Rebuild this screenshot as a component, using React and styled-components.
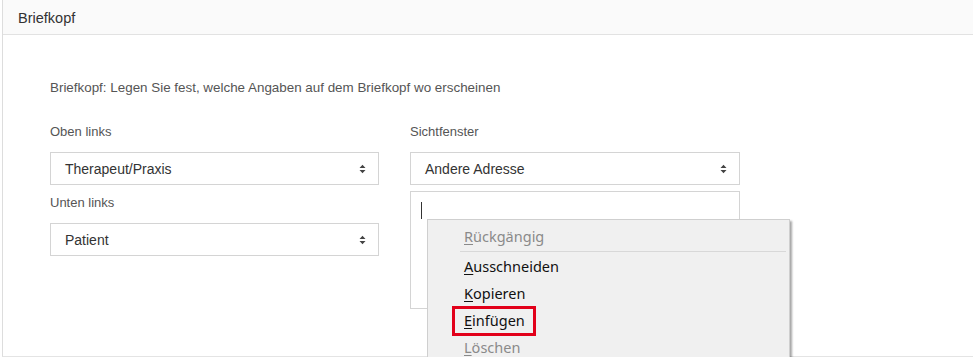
import React from 'react'
import styled, { createGlobalStyle } from 'styled-components'

const Global = createGlobalStyle`
  html, body { margin: 0; padding: 0; background: #fff; overflow: hidden; }
  body { font-family: "Liberation Sans", Arial, sans-serif; color: #333; }
`

const Panel = styled.div`
  margin-left: 2px;
  width: 971px;
  height: 357px;
  border-left: 1px solid #ddd;
  border-bottom: 1px solid #e4e4e4;
  box-sizing: border-box;
`

const Header = styled.div`
  height: 35px;
  box-sizing: border-box;
  background: #fafafa;
  border-bottom: 1px solid #e2e2e2;
  padding: 10px 0 0 15px;
  font-size: 14.5px;
  color: #333;
`

const Body = styled.div`
  padding: 44px 0 0 47px;
`

const Intro = styled.p`
  margin: 0 0 28px;
  font-size: 13.4px;
  line-height: 17px;
  color: #555;
`

const Columns = styled.div`
  display: grid;
  grid-template-columns: 329px 330px;
  column-gap: 31px;
  align-items: start;
`

const Column = styled.div`
  display: flex;
  flex-direction: column;
`

const Label = styled.div`
  font-size: 13px;
  line-height: 16px;
  color: #555;
  margin: ${p => p.$first ? '0' : '10px'} 0 12px;
`

const Select = styled.div`
  height: 33px;
  box-sizing: border-box;
  border: 1px solid #d4d4d4;
  display: flex;
  align-items: center;
  justify-content: space-between;
  padding: 0 12px 0 14px;
  font-size: 14px;
  color: #333;
  background: #fff;
`

const TextBox = styled.div`
  position: relative;
  margin-top: 6px;
  height: 118px;
  box-sizing: border-box;
  border: 1px solid #d4d4d4;
  background: #fff;
`

const Caret = styled.span`
  position: absolute;
  left: 10px;
  top: 10px;
  width: 1px;
  height: 17px;
  background: #333;
`

const Menu = styled.div`
  position: absolute;
  left: 16px;
  top: 27px;
  width: 363px;
  height: 142px;
  box-sizing: border-box;
  overflow: hidden;
  background: #f0f0f0;
  border: 1px solid #cfcfcf;
  border-bottom: none;
  box-shadow: 2px 2px 2px rgba(0, 0, 0, 0.35);
  padding-top: 3px;
  font-family: "Noto Sans", "Open Sans", sans-serif;
  font-size: 14.5px;
`

const Item = styled.div`
  position: relative;
  height: 27px;
  line-height: 27px;
  padding-left: 36px;
  color: ${p => p.$disabled ? '#8a8a8a' : '#111'};
  u { text-decoration-thickness: 1px; text-underline-offset: 2px; }
`

const Separator = styled.div`
  height: 1px;
  margin: 1px 3px 1px 32px;
  background: #d8d8d8;
`

const Highlight = styled.span`
  position: absolute;
  left: 24px;
  top: -1px;
  width: 78px;
  height: 24px;
  border: 3px solid #e2001a;
`

const Arrows = () => (
  <svg width="7" height="10" viewBox="0 0 7 10">
    <path d="M0.5 4 L3.5 0.8 L6.5 4 Z M0.5 6 L3.5 9.2 L6.5 6 Z" fill="#444" />
  </svg>
)

const Dropdown = ({ value }) => (
  <Select>
    <span>{value}</span>
    <Arrows />
  </Select>
)

export default function App() {
  return (
    <>
      <Global />
      <Panel>
        <Header>Briefkopf</Header>
        <Body>
          <Intro>Briefkopf: Legen Sie fest, welche Angaben auf dem Briefkopf wo erscheinen</Intro>
          <Columns>
            <Column>
              <Label $first>Oben links</Label>
              <Dropdown value="Therapeut/Praxis" />
              <Label>Unten links</Label>
              <Dropdown value="Patient" />
            </Column>
            <Column>
              <Label $first>Sichtfenster</Label>
              <Dropdown value="Andere Adresse" />
              <TextBox>
                <Caret />
                <Menu>
                  <Item $disabled><u>R</u>ückgängig</Item>
                  <Separator />
                  <Item><u>A</u>usschneiden</Item>
                  <Item><u>K</u>opieren</Item>
                  <Item><Highlight /><u>E</u>infügen</Item>
                  <Item $disabled><u>L</u>öschen</Item>
                </Menu>
              </TextBox>
            </Column>
          </Columns>
        </Body>
      </Panel>
    </>
  )
}
